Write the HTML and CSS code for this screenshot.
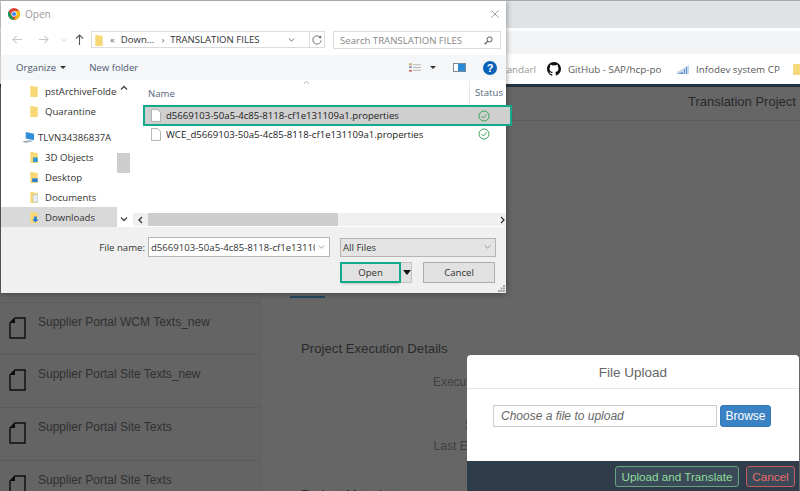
FILE: index.html
```html
<!DOCTYPE html>
<html lang="en">
<head>
<meta charset="utf-8">
<title>Open</title>
<link rel="stylesheet" href="styles.css">
</head>
<body>
<div class="page">
  <header class="browser">
    <div class="tabstrip"></div>
    <div class="omnibox"></div>
    <div class="bookmarks">
      <span class="bm bm-cut">Standarl</span>
      <span class="bm bm-git">
        <svg class="bm-icon" viewBox="0 0 16 16"><path fill="#111" d="M8 0C3.6 0 0 3.6 0 8c0 3.5 2.3 6.5 5.5 7.6.4.1.5-.2.5-.4v-1.4c-2.2.5-2.7-1.1-2.7-1.1-.4-.9-.9-1.2-.9-1.2-.7-.5.1-.5.1-.5.8.1 1.2.8 1.2.8.7 1.2 1.9.9 2.3.7.1-.5.3-.9.5-1.1-1.8-.2-3.6-.9-3.6-4 0-.9.3-1.6.8-2.1-.1-.2-.4-1 .1-2.1 0 0 .7-.2 2.2.8.6-.2 1.3-.3 2-.3s1.4.1 2 .3c1.5-1 2.2-.8 2.2-.8.4 1.1.2 1.9.1 2.1.5.6.8 1.3.8 2.1 0 3.1-1.9 3.7-3.7 3.9.3.3.6.8.6 1.5v2.2c0 .2.1.5.6.4C13.7 14.5 16 11.5 16 8c0-4.4-3.6-8-8-8z"/></svg>
        <span class="bm-fade">GitHub - SAP/hcp-po</span>
      </span>
      <span class="bm bm-info">
        <svg class="bm-icon-sm" viewBox="0 0 12 12"><path fill="#c9d9ee" d="M0 9 12 2v9H0z"/><path fill="#5b8fd0" d="M7 11V6h1v5zm2 0V4h1v7zM0 11l6-2v2z"/></svg>
        <span>Infodev system CP</span>
      </span>
      <span class="bm-folder"></span>
    </div>
  </header>

  <main class="app">
    <aside class="sidebar">
      <div class="side-row side-spacer"></div>
      <div class="side-row side-first">
        <svg class="doc" viewBox="0 0 17 22"><path fill="none" stroke="#0d0d0d" stroke-width="1.4" d="M6 1h10v20H1V6z"/><path fill="#0d0d0d" d="M6 1v5H1z"/></svg>
        <span>Supplier Portal WCM Texts_new</span>
      </div>
      <div class="side-row">
        <svg class="doc" viewBox="0 0 17 22"><path fill="none" stroke="#0d0d0d" stroke-width="1.4" d="M6 1h10v20H1V6z"/><path fill="#0d0d0d" d="M6 1v5H1z"/></svg>
        <span>Supplier Portal Site Texts_new</span>
      </div>
      <div class="side-row">
        <svg class="doc" viewBox="0 0 17 22"><path fill="none" stroke="#0d0d0d" stroke-width="1.4" d="M6 1h10v20H1V6z"/><path fill="#0d0d0d" d="M6 1v5H1z"/></svg>
        <span>Supplier Portal Site Texts</span>
      </div>
      <div class="side-row">
        <svg class="doc" viewBox="0 0 17 22"><path fill="none" stroke="#0d0d0d" stroke-width="1.4" d="M6 1h10v20H1V6z"/><path fill="#0d0d0d" d="M6 1v5H1z"/></svg>
        <span>Supplier Portal Site Texts</span>
      </div>
    </aside>
    <section class="detail">
      <div class="detail-title">Translation Project</div>
      <div class="tabs"><span class="tab-active"></span></div>
      <h2 class="section-title">Project Execution Details</h2>
      <dl class="fields">
        <dt class="field-first">Execution Status</dt>
        <dt>Started On</dt>
        <dt>Last Executed at</dt>
      </dl>
      <h2 class="section-title meta-title">Project Metadata</h2>
    </section>
  </main>

  <div class="dialog">
    <div class="dlg-title">
      <svg class="chrome" viewBox="0 0 16 16">
        <circle cx="8" cy="8" r="8" fill="#db4437"/>
        <path fill="#0f9d58" d="M8 16A8 8 0 0 1 1 4l3.6 6.2L8.6 16z"/>
        <path fill="#f4c20d" d="M8 16l3.6-6.2L8 4h7a8 8 0 0 1-7 12z"/>
        <circle cx="8" cy="8" r="3.6" fill="#fff"/>
        <circle cx="8" cy="8" r="2.8" fill="#4285f4"/>
      </svg>
      <span class="dlg-name">Open</span>
      <svg class="dlg-close" viewBox="0 0 10 10"><path stroke="#8a8a8a" d="M.5.5l9 9m0-9l-9 9"/></svg>
    </div>

    <div class="dlg-nav">
      <svg class="nav-arrow" viewBox="0 0 12 10"><path fill="none" stroke="#c9c9c9" stroke-width="1.2" d="M11 5H1m4-4L1 5l4 4"/></svg>
      <svg class="nav-arrow" viewBox="0 0 12 10"><path fill="none" stroke="#c9c9c9" stroke-width="1.2" d="M1 5h10M7 1l4 4-4 4"/></svg>
      <svg class="nav-down" viewBox="0 0 8 5"><path fill="none" stroke="#c9c9c9" d="M1 1l3 3 3-3"/></svg>
      <svg class="nav-up" viewBox="0 0 10 12"><path fill="none" stroke="#555" stroke-width="1.2" d="M5 12V1M1 5l4-4 4 4"/></svg>
      <div class="addr">
        <svg class="folder-sm" viewBox="0 0 8 13"><path fill="#f8d775" d="M0 1h3l1 1h4v11H0z"/></svg>
        <span class="crumb-mark">«</span>
        <span>Down...</span>
        <span class="crumb-sep">›</span>
        <span>TRANSLATION FILES</span>
        <svg class="addr-caret" viewBox="0 0 8 5"><path fill="none" stroke="#555" d="M.5.5L4 4 7.5.5"/></svg>
      </div>
      <div class="refresh">
        <svg viewBox="0 0 12 12"><path fill="none" stroke="#666" stroke-width="1.1" d="M10.2 3.2A5 5 0 1 0 11 6.5"/><path fill="#666" d="M7.5 3.5l3.5.5V.5z"/></svg>
      </div>
      <div class="search">
        <span>Search TRANSLATION FILES</span>
        <svg class="search-icon" viewBox="0 0 10 10"><circle cx="6.2" cy="3.8" r="2.8" fill="none" stroke="#555" stroke-width="1.1"/><path stroke="#555" stroke-width="1.4" d="M4 6L.8 9.2"/></svg>
      </div>
    </div>

    <div class="dlg-tools">
      <span class="tool tool-org">Organize</span>
      <span class="tool-caret"></span>
      <span class="tool tool-new">New folder</span>
      <span class="tool-views">
        <svg class="views-icon" viewBox="0 0 13 10"><path fill="#b8b8b8" d="M4 1h9v1H4zm0 3h9v1H4zm0 3h9v1H4z"/><path fill="#c9a45c" d="M0 0h3v2H0z"/><path fill="#8a9bb5" d="M0 3h3v2H0z"/><path fill="#c76a5a" d="M0 7h3v2H0z"/></svg>
        <span class="tool-caret"></span>
      </span>
      <span class="pane-icon"><span></span></span>
      <span class="help">?</span>
    </div>

    <div class="dlg-body">
      <nav class="tree">
        <div class="tree-list">
          <div class="tree-item tree-in"><svg class="tree-icon" viewBox="0 0 8 13"><path fill="#f8d775" d="M0 1h3l1 1h4v11H0z"/></svg><span class="tree-clip">pstArchiveFolder</span></div>
          <div class="tree-item tree-in"><svg class="tree-icon" viewBox="0 0 8 13"><path fill="#f8d775" d="M0 1h3l1 1h4v11H0z"/></svg><span>Quarantine</span></div>
          <div class="tree-item tree-pc"><svg class="pc-icon" viewBox="0 0 14 12"><path fill="#2f8fd8" d="M4 0l9 2v7L4 7z"/><path fill="#9cb2c5" d="M0 10l9-1 3 1-8 2z"/></svg><span>TLVN34386837A</span></div>
          <div class="tree-item tree-in"><svg class="tree-icon" viewBox="0 0 8 13"><path fill="#f8d775" d="M0 1h3l1 1h4v11H0z"/><path fill="#2c9ad6" d="M3 7h5v5H3z"/></svg><span>3D Objects</span></div>
          <div class="tree-item tree-in"><svg class="tree-icon" viewBox="0 0 8 13"><path fill="#f8d775" d="M0 1h3l1 1h4v11H0z"/><path fill="#2c7fd0" d="M2 8h6v4H2z"/></svg><span>Desktop</span></div>
          <div class="tree-item tree-in"><svg class="tree-icon" viewBox="0 0 8 13"><path fill="#f8d775" d="M0 1h3l1 1h4v11H0z"/><path fill="#e8eef5" stroke="#9bb" stroke-width=".5" d="M3 4h5v8H3z"/></svg><span>Documents</span></div>
          <div class="tree-item tree-in tree-sel"><svg class="tree-icon" viewBox="0 0 8 13"><path fill="#f8d775" d="M0 1h3l1 1h4v11H0z"/><path fill="#2a7fd6" d="M4 6h3v3h2l-3.500 3.500L2 9h2z"/></svg><span>Downloads</span></div>
        </div>
        <div class="tree-scroll">
          <svg class="arrow-v" viewBox="0 0 8 5"><path fill="none" stroke="#444" stroke-width="1.3" d="M1 4.500l3-3 3 3"/></svg>
          <span class="tree-thumb"></span>
          <svg class="arrow-v" viewBox="0 0 8 5"><path fill="none" stroke="#444" stroke-width="1.3" d="M1 .5l3 3 3-3"/></svg>
        </div>
      </nav>
      <div class="files">
        <div class="files-head">
          <span class="col-name">Name</span>
          <svg class="sort" viewBox="0 0 8 4"><path fill="none" stroke="#999" d="M.5 3.500L4 .5l3.500 3"/></svg>
          <span class="col-status">Status</span>
        </div>
        <div class="file-row file-sel">
          <svg class="file-icon" viewBox="0 0 11 14"><path fill="#fff" stroke="#aaa" d="M.5.5h7l3 3v10H.5z"/></svg>
          <span class="file-name">d5669103-50a5-4c85-8118-cf1e131109a1.properties</span>
          <svg class="ok" viewBox="0 0 12 12"><circle cx="6" cy="6" r="5" fill="none" stroke="#3da35a"/><path fill="none" stroke="#3da35a" d="M3.500 6l2 2 3-3.500"/></svg>
        </div>
        <div class="file-row">
          <svg class="file-icon" viewBox="0 0 11 14"><path fill="#fff" stroke="#aaa" d="M.5.5h7l3 3v10H.5z"/></svg>
          <span class="file-name">WCE_d5669103-50a5-4c85-8118-cf1e131109a1.properties</span>
          <svg class="ok" viewBox="0 0 12 12"><circle cx="6" cy="6" r="5" fill="none" stroke="#3da35a"/><path fill="none" stroke="#3da35a" d="M3.500 6l2 2 3-3.500"/></svg>
        </div>
        <div class="hscroll">
          <svg class="arrow-h" viewBox="0 0 5 8"><path fill="none" stroke="#333" stroke-width="1.3" d="M4 1L1 4l3 3"/></svg>
          <span class="h-thumb"></span>
          <svg class="arrow-h" viewBox="0 0 5 8"><path fill="none" stroke="#333" stroke-width="1.3" d="M1 1l3 3-3 3"/></svg>
        </div>
      </div>
    </div>

    <div class="dlg-foot">
      <div class="foot-row">
        <label class="fn-label">File name:</label>
        <div class="fn-input">
          <span class="fn-text">d5669103-50a5-4c85-8118-cf1e131109a1.properties</span>
          <svg class="fn-caret" viewBox="0 0 8 5"><path fill="none" stroke="#888" d="M.5.5L4 4 7.500.5"/></svg>
        </div>
        <div class="type-select">
          <span>All Files</span>
          <svg class="fn-caret" viewBox="0 0 8 5"><path fill="none" stroke="#888" d="M.5.5L4 4 7.500.5"/></svg>
        </div>
      </div>
      <div class="foot-row foot-btns">
        <div class="split">
          <span class="btn btn-open">Open</span>
          <span class="btn-drop"></span>
        </div>
        <span class="btn btn-cancel">Cancel</span>
      </div>
      <svg class="grip" viewBox="0 0 7 7"><path fill="#a8a8a8" d="M5 0h2v2H5zM2.500 2.500h2v2h-2zM5 2.500h2v2H5zM0 5h2v2H0zM2.500 5h2v2h-2zM5 5h2v2H5z"/></svg>
    </div>
  </div>

  <div class="upload">
    <div class="up-head">File Upload</div>
    <div class="up-body">
      <div class="up-input">Choose a file to upload</div>
      <span class="up-browse">Browse</span>
    </div>
    <div class="up-foot">
      <span class="up-btn up-go">Upload and Translate</span>
      <span class="up-btn up-cancel">Cancel</span>
    </div>
  </div>
</div>
</body>
</html>
```

FILE: styles.css
```css
* { box-sizing: border-box; }
html, body { margin: 0; padding: 0; }
body { width: 800px; height: 491px; overflow: hidden; }
.page {
  position: relative; width: 800px; height: 491px; overflow: hidden;
  display: flex; flex-direction: column;
  background: #656565;
  font-family: "Liberation Sans", Arial, sans-serif;
  border-top: 1px solid #a8a8a8;
}

/* browser chrome */
.browser { flex: none; }
.tabstrip { height: 27px; background: #e0e3e6; }
.omnibox { height: 26px; background: #f3f4f5; border-top: 3px solid #fff; }
.bookmarks {
  height: 30px; background: #fff; position: relative;
  display: flex; align-items: center;
  font: 9.8px "Open Sans", sans-serif; color: #5a5a5a;
  padding-left: 506px;
}
.bm { display: flex; align-items: center; white-space: nowrap; flex: none; }
.bm-cut { width: 30px; overflow: hidden; color: #999; direction: rtl; }
.bm-git { margin-left: 11px; gap: 7px; width: 114px; }
.bm-icon { width: 14px; height: 14px; }
.bm-fade { width: 93px; overflow: hidden; }
.bm-info { margin-left: 16px; gap: 7px; }
.bm-icon-sm { width: 12px; height: 12px; }
.bm-folder { margin-left: 13px; width: 10px; height: 11px; flex: none; background: #f6d97c; border-radius: 1px; }

/* application behind the modal */
.app {
  flex: 1; display: flex; min-height: 0;
  border-top: 3px solid #22333f;
  color: #2b2b2b;
}
.sidebar { width: 261px; flex: none; border-right: 1px solid #5d5d5d; background: #646464; }
.side-row {
  height: 53px; display: flex; gap: 12px; padding: 12px 0 0 9px;
  border-bottom: 1px solid #5c5c5c;
  font-size: 12px; color: #303030;
}
.side-spacer { height: 216px; }
.side-first { height: 52px; }
.doc { width: 17px; height: 22px; flex: none; margin-top: 2px; }
.detail { flex: 1; background: #666; position: relative; }
.detail-title { height: 34px; padding: 7px 0 0 427px; font-size: 13px; white-space: nowrap; color: #2a2a2a; border-bottom: 1px solid #5d5d5d; }
.tabs { height: 177px; border-bottom: 1px solid #5f6468; position: relative; display: flex; align-items: flex-end; padding-left: 29px; }
.tab-active { width: 35px; height: 2px; background: #24465c; margin-bottom: -1px; }
.section-title { margin: 43px 0 0 40px; font-size: 13.200px; font-weight: 400; color: #2a2a2a; }
.fields { margin: 19px 0 0; width: 262px; text-align: right; font-size: 12px; color: #404040; }
.fields dt { height: 21px; line-height: 14px; }
.fields .field-first { margin-bottom: 22px; }
.section-title.meta-title { margin-top: 27px; white-space: nowrap; }

/* native file dialog */
.dialog {
  position: absolute; left: 1px; top: 0; width: 505px; height: 292px;
  background: #fff; display: flex; flex-direction: column;
  box-shadow: 0 0 6px rgba(0,0,0,.45);
  font-family: "Open Sans", sans-serif; font-size: 9.600px; color: #333;
}
.dlg-title { height: 26px; flex: none; display: flex; align-items: center; padding: 0 7px 0 7px; }
.chrome { width: 12px; height: 12px; }
.dlg-name { margin-left: 5px; color: #999; font-size: 10px; }
.dlg-close { width: 8px; height: 8px; margin-left: auto; }
.dlg-nav { height: 28px; flex: none; display: flex; align-items: flex-start; padding: 4px 0 0 11px; }
.nav-arrow { width: 11px; height: 9px; margin: 4px 15px 0 0; }
.nav-down { width: 6px; height: 4px; margin: 7px 8px 0 -3px; }
.nav-up { width: 9px; height: 11px; margin: 3px 7px 0 0; }
.addr {
  width: 219px; height: 17px; border: 1px solid #dcdcdc; display: flex; align-items: center;
  padding: 0 5px 0 3px; white-space: nowrap; color: #333;
}
.folder-sm { width: 8px; height: 12px; margin-right: 7px; }
.crumb-mark { margin-right: 6px; color: #666; }
.crumb-sep { margin: 0 6px 0 7px; color: #666; }
.addr-caret { width: 7px; height: 4px; margin-left: auto; margin-right: 9px; }
.refresh { width: 15px; height: 17px; border: 1px solid #dcdcdc; border-left: 0; display: flex; align-items: center; justify-content: center; }
.refresh svg { width: 10px; height: 10px; }
.search {
  width: 168px; height: 18px; margin-left: 8px; border: 1px solid #dcdcdc; display: flex; align-items: center;
  padding: 0 7px 0 6px; color: #888; white-space: nowrap;
}
.search-icon { width: 9px; height: 9px; margin-left: auto; }
.dlg-tools { height: 25px; flex: none; background: #f5f6f7; display: flex; align-items: center; padding: 0 9px 0 15px; color: #4a5a70; }
.tool-caret { width: 0; height: 0; border: 3px solid transparent; border-top: 3px solid #333; border-bottom: 0; }
.tool-org + .tool-caret { margin-left: 4px; }
.tool-new { margin-left: 23px; }
.tool-views { margin-left: auto; display: flex; align-items: center; gap: 9px; }
.views-icon { width: 12px; height: 10px; }
.pane-icon { margin-left: 17px; width: 13px; height: 9px; border: 1px solid #7a8a9a; display: flex; justify-content: flex-end; background: #fff; }
.pane-icon span { width: 7px; background: #2a8ad6; }
.help { margin-left: 17px; width: 14px; height: 14px; border-radius: 50%; background: #0a62b8; color: #fff; font: bold 11px/14px "Liberation Sans", sans-serif; text-align: center; }

.dlg-body { height: 147px; flex: none; display: flex; }
.tree { width: 130px; flex: none; display: flex; }
.tree-list { width: 116px; padding-top: 1px; color: #333; }
.tree-item { height: 20px; display: flex; align-items: center; white-space: nowrap; }
.tree-in { padding-left: 29px; gap: 7px; }
.tree-pc { padding-left: 21px; gap: 3px; margin: 6px 0 0; }
.tree-icon { width: 8px; height: 12px; flex: none; }
.pc-icon { width: 13px; height: 11px; }
.tree-clip { width: 73px; overflow: hidden; }
.tree-sel { background: #d9d9d9; }
.tree-scroll { width: 13px; display: flex; flex-direction: column; align-items: center; background: #fff; position: relative; padding-top: 5px; }
.arrow-v { width: 8px; height: 5px; flex: none; }
.tree-thumb { width: 13px; height: 20px; background: #cdcdcd; margin-top: 63px; }
.tree-scroll .arrow-v:last-child { margin-top: auto; margin-bottom: 5px; }
.files { flex: 1; display: flex; flex-direction: column; padding-left: 2px; position: relative; }
.files-head { height: 27px; flex: none; position: relative; display: flex; align-items: center; padding-left: 15px; color: #55657a; }
.sort { position: absolute; left: 170px; top: 1px; width: 7px; height: 3px; }
.col-status { margin-left: auto; padding: 0 3px 0 5px; border-left: 1px solid #e6e6e6; height: 26px; line-height: 24px; }
.file-row { height: 18px; flex: none; display: flex; align-items: center; position: relative; margin-left: 12px; padding-left: 6px; white-space: nowrap; color: #222; }
.file-icon { width: 10px; height: 13px; flex: none; }
.file-name { margin-left: 5px; }
.ok { width: 12px; height: 12px; position: absolute; right: 16px; }
.file-sel { height: 17px; background: #cfcfcf; outline: 2px solid #14a98a; margin-bottom: 1px; margin-right: -4px; box-shadow: 0 0 3px rgba(0,0,0,.4); }
.file-sel .ok { right: 20px; }
.hscroll { margin-top: auto; height: 13px; margin-bottom: 1px; display: flex; align-items: center; background: #f0f0f0; padding: 0 0 0 5px; }
.arrow-h { width: 5px; height: 8px; flex: none; }
.h-thumb { width: 190px; height: 13px; background: #cdcdcd; margin-left: 5px; }
.hscroll .arrow-h:last-child { margin-left: auto; position: relative; left: -1px; }

.dlg-foot { flex: 1; background: #f0f0f0; position: relative; padding-top: 10px; color: #333; }
.foot-row { display: flex; align-items: center; }
.fn-label { width: 147px; text-align: right; padding-right: 3px; }
.fn-input { width: 182px; height: 20px; background: #fff; border: 1px solid #b5b5b5; display: flex; align-items: center; padding: 0 4px 0 2px; white-space: nowrap; }
.fn-text { width: 164px; overflow: hidden; }
.fn-caret { width: 7px; height: 4px; margin-left: auto; flex: none; }
.type-select { width: 156px; height: 19px; margin-left: 10px; background: #e4e4e4; border: 1px solid #b5b5b5; display: flex; align-items: center; padding: 0 4px 0 2px; }
.foot-btns { margin-top: 5px; padding-left: 339px; }
.split { display: flex; align-items: center; width: 72px; height: 21px; background: #e1e1e1; border: 1px solid #c4c4c4; }
.btn { display: flex; align-items: center; justify-content: center; background: #e1e1e1; }
.btn-open { width: 58px; height: 17px; margin-left: 1px; outline: 2px solid #14a98a; box-shadow: 0 2px 3px rgba(0,0,0,.4); }
.btn-drop { width: 0; height: 0; margin-left: 4px; border: 4px solid transparent; border-top: 5px solid #111; border-bottom: 0; }
.btn-cancel { width: 72px; height: 21px; margin-left: 11px; border: 1px solid #adadad; }
.grip { position: absolute; right: 1px; bottom: 1px; width: 7px; height: 7px; }

/* upload modal */
.upload {
  position: absolute; left: 467px; top: 354px; width: 332px; height: 136px;
  background: #fff; border-radius: 4px 4px 0 0; overflow: hidden;
  display: flex; flex-direction: column;
  font-family: "Liberation Sans", Arial, sans-serif;
}
.up-head { height: 34px; flex: none; text-align: center; line-height: 36px; font-size: 13.500px; color: #666; border-bottom: 1px solid #e5e5e5; }
.up-body { flex: 1; display: flex; align-items: flex-start; padding: 16px 0 0 26px; gap: 3px; }
.up-input { width: 224px; height: 22px; border: 1px solid #ccc; padding: 0 7px; line-height: 20px; font-size: 12px; font-style: italic; color: #666; }
.up-browse { width: 51px; height: 22px; background: #3b82c4; border: 1px solid #357ab8; border-radius: 3px; color: #fff; font-size: 12px; line-height: 20px; text-align: center; }
.up-foot { height: 30px; flex: none; background: #2f3d4a; display: flex; justify-content: flex-end; align-items: center; padding-right: 4px; gap: 7px; }
.up-btn { height: 21px; border-radius: 3px; font-size: 11.700px; line-height: 19px; text-align: center; background: #3a4a59; }
.up-go { width: 124px; border: 1px solid #68a27f; color: #8fdc9a; }
.up-cancel { width: 49px; border: 1px solid #c9595c; color: #e96a6a; }
```
